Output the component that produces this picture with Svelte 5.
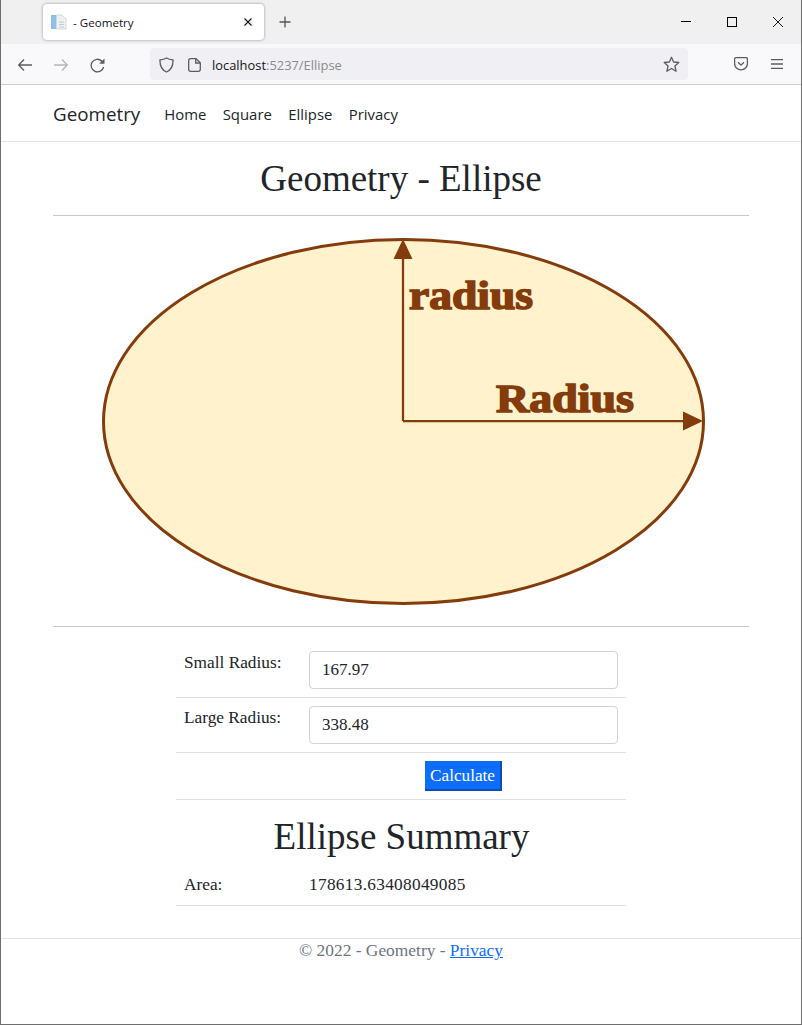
<script>
  const links = ['Home', 'Square', 'Ellipse', 'Privacy'];
  let small = $state('167.97');
  let large = $state('338.48');
</script>

<div class="window">
  <div class="tabstrip">
    <div class="tab">
      <svg class="favicon" width="16" height="16" viewBox="0 0 16 16">
        <rect x="0" y="1" width="5" height="14" fill="#8fc0e8"/>
        <path d="M5.500 1H11L15 5V15H5.500Z" fill="#eef1f4" stroke="#d3d8de" stroke-width="1"/>
        <path d="M8 8h5M8 10.500h5M8 13h5" stroke="#c0c8d0" stroke-width="1"/>
      </svg>
      <span class="tabtitle">- Geometry</span>
      <svg class="tabclose" width="10" height="10" viewBox="0 0 10 10"><path d="M1.500 1.500l7 7M8.500 1.500l-7 7" stroke="#15141a" stroke-width="1.100" fill="none"/></svg>
    </div>
    <svg class="newtab" width="12" height="12" viewBox="0 0 12 12"><path d="M6 0.500v11M0.500 6h11" stroke="#55545a" stroke-width="1.300" fill="none"/></svg>
    <div class="winctl">
      <span class="ctl"><svg width="10" height="10" viewBox="0 0 10 10"><path d="M0 4.500h10" stroke="#000" fill="none"/></svg></span>
      <span class="ctl"><svg width="10" height="10" viewBox="0 0 10 10"><rect x="0.500" y="0.500" width="9" height="9" stroke="#000" fill="none"/></svg></span>
      <span class="ctl"><svg width="10" height="10" viewBox="0 0 10 10"><path d="M0 0l10 10M10 0l-10 10" stroke="#000" stroke-width="0.900" fill="none"/></svg></span>
    </div>
  </div>

  <div class="toolbar">
    <svg class="back" width="14" height="12" viewBox="0 0 14 12"><path d="M14 6H1M6 0.500L0.700 6L6 11.500" stroke="#5b5b66" stroke-width="1.300" fill="none"/></svg>
    <svg class="fwd" width="14" height="12" viewBox="0 0 14 12"><path d="M0 6H13M8 0.500L13.300 6L8 11.500" stroke="#b4b4ba" stroke-width="1.300" fill="none"/></svg>
    <svg class="reload" width="15" height="15" viewBox="0 0 15 15"><path d="M13.600 9A6.300 6.300 0 1 1 11.800 3L13.500 4.800" stroke="#5b5b66" stroke-width="1.300" fill="none"/><path d="M14.500 0.500V5.800H9.200z" fill="#5b5b66"/></svg>
    <div class="urlbar">
      <svg class="shield" width="15" height="16" viewBox="0 0 15 16"><path d="M7.500 1C9.500 2.200 11.500 2.600 14 2.800C14.300 9 12 13 7.500 15C3 13 0.700 9 1 2.800C3.500 2.600 5.500 2.200 7.500 1Z" stroke="#5b5b66" stroke-width="1.300" fill="none"/></svg>
      <svg class="doc" width="13" height="14" viewBox="0 0 13 14"><path d="M2.500 0.700H8L12.300 4.800V11.500A1.800 1.800 0 0 1 10.500 13.300H2.500A1.800 1.800 0 0 1 0.700 11.500V2.500A1.800 1.800 0 0 1 2.500 0.700Z" stroke="#5b5b66" stroke-width="1.300" fill="none"/><path d="M7.700 1V5H12" stroke="#5b5b66" stroke-width="1.300" fill="none"/></svg>
      <span class="url">localhost<span class="dim">:5237/Ellipse</span></span>
      <svg class="star" width="17" height="17" viewBox="0 0 17 17"><path d="M8.500 1.300L10.600 6L15.800 6.500L11.900 10L13.100 15.200L8.500 12.500L3.900 15.200L5.100 10L1.200 6.500L6.400 6Z" stroke="#5b5b66" stroke-width="1.300" stroke-linejoin="round" fill="none"/></svg>
    </div>
    <svg class="pocket" width="14" height="14" viewBox="0 0 14 14"><path d="M1.800 0.700H12.200A1.200 1.200 0 0 1 13.400 1.900V6.500A6.400 6.400 0 0 1 0.600 6.500V1.900A1.200 1.200 0 0 1 1.800 0.700Z" stroke="#5b5b66" stroke-width="1.300" fill="none"/><path d="M4 5.200L7 8.200L10 5.200" stroke="#5b5b66" stroke-width="1.300" fill="none"/></svg>
    <svg class="menu" width="12" height="10" viewBox="0 0 12 10"><path d="M0 0.700h12M0 5h12M0 9.300h12" stroke="#5b5b66" stroke-width="1.300" fill="none"/></svg>
  </div>

  <nav class="navbar">
    <span class="brand">Geometry</span>
    <ul>
      {#each links as l}
        <li>{l}</li>
      {/each}
    </ul>
  </nav>

  <main class="container">
    <h1>Geometry - Ellipse</h1>
    <hr />
    <div class="figure">
      <svg width="696" height="392" viewBox="0 0 696 392">
        <ellipse cx="350.500" cy="205.500" rx="300" ry="182" fill="#fff2cc" stroke="#843c0c" stroke-width="3"/>
        <path d="M350 205V40M350 205H632" stroke="#843c0c" stroke-width="2.250" fill="none"/>
        <polygon points="350,23 340.500,43 359.500,43" fill="#843c0c"/>
        <polygon points="650,205 630,195.500 630,214.500" fill="#843c0c"/>
        <text class="lab" x="356" y="93" textLength="124" lengthAdjust="spacingAndGlyphs">radius</text>
        <text class="lab" x="443" y="196" textLength="138" lengthAdjust="spacingAndGlyphs">Radius</text>
      </svg>
    </div>
    <hr />
    <div class="tablewrap">
      <div class="row">
        <label class="name" for="small">Small Radius:</label>
        <input id="small" bind:value={small} />
      </div>
      <div class="row">
        <label class="name" for="large">Large Radius:</label>
        <input id="large" bind:value={large} />
      </div>
      <div class="row btnrow">
        <button>Calculate</button>
      </div>
      <h2>Ellipse Summary</h2>
      <div class="row result">
        <span class="name">Area:</span>
        <span class="val">178613.63408049085</span>
      </div>
    </div>
  </main>

  <footer>© 2022 - Geometry - <a href="#privacy">Privacy</a></footer>
</div>

<style>
  :global(body) {
    margin: 0;
    background: #fff;
  }
  .window {
    box-sizing: border-box;
    width: 802px;
    height: 1025px;
    border-left: 1px solid #6e6e6e;
    border-right: 1px solid #6e6e6e;
    border-bottom: 1px solid #6e6e6e;
    font-family: "Liberation Serif", serif;
    color: #212529;
    overflow: hidden;
  }
  .tabstrip {
    height: 44px;
    background: #f0f0f0;
    display: flex;
    align-items: center;
    padding-left: 42px;
  }
  .tab {
    width: 221px;
    height: 36px;
    background: #fff;
    border-radius: 4px;
    box-shadow: 0 0 3px rgba(0, 0, 0, 0.4);
    display: flex;
    align-items: center;
    padding: 0 11px 0 8px;
    box-sizing: border-box;
  }
  .favicon { flex: none; }
  .tabtitle {
    font: 11.600px "Open Sans", sans-serif;
    color: #15141a;
    margin-left: 6px;
    flex: 1;
  }
  .newtab { margin-left: 15px; }
  .winctl {
    margin-left: auto;
    display: flex;
  }
  .ctl {
    width: 46px;
    height: 30px;
    display: flex;
    align-items: center;
    justify-content: center;
  }
  .toolbar {
    height: 40px;
    background: #f9f9fb;
    border-bottom: 1px solid #ccc;
    display: flex;
    align-items: center;
    padding-left: 17px;
  }
  .back, .fwd, .reload { margin-top: 2px; }
  .fwd { margin-left: 22px; }
  .reload { margin-left: 22px; }
  .urlbar {
    margin-left: 45px;
    width: 538px;
    height: 32px;
    background: #f0f0f4;
    border-radius: 4px;
    display: flex;
    align-items: center;
    padding: 0 8px 0 9px;
    box-sizing: border-box;
  }
  .shield, .doc, .url, .star { margin-top: 1px; }
  .doc { margin-left: 14px; }
  .url {
    font: 12.900px "Open Sans", sans-serif;
    color: #15141a;
    margin-left: 11px;
    flex: 1;
  }
  .dim { color: #8a8a90; }
  .pocket { margin-left: 46px; }
  .menu { margin-left: 23px; }
  .navbar {
    height: 54px;
    padding-top: 2px;
    border-bottom: 1px solid #e3e3e3;
    box-sizing: content-box;
    display: flex;
    align-items: center;
    padding-left: 52px;
    font-family: "Open Sans", sans-serif;
  }
  .brand {
    font-size: 18.800px;
    color: #212529;
    margin-right: 24px;
  }
  ul {
    display: flex;
    gap: 16.400px;
    list-style: none;
    margin: 0;
    padding: 0;
    font-size: 14.900px;
    color: #212529;
  }
  .container {
    margin: 0 52px;
    width: 696px;
  }
  h1 {
    font-weight: 400;
    font-size: 37px;
    line-height: 44px;
    text-align: center;
    margin: 15px 0 14px;
  }
  hr {
    border: 0;
    border-top: 1px solid #c8c8c8;
    margin: 0;
  }
  .figure {
    height: 410px;
    overflow: hidden;
  }
  .figure svg { display: block; }
  .lab {
    font-family: "Liberation Serif", serif;
    font-weight: 700;
    font-size: 39px;
    fill: #843c0c;
    stroke: #843c0c;
    stroke-width: 1.500px;
  }
  .tablewrap {
    width: 450px;
    margin: 16px 0 0 123px;
    font-size: 17.300px;
  }
  .row {
    display: flex;
    align-items: flex-start;
    border-bottom: 1px solid #dee2e6;
    padding: 8px;
    box-sizing: border-box;
    height: 55px;
  }
  .name {
    width: 125px;
    flex: none;
    padding-top: 2px;
    line-height: 20px;
  }
  input {
    width: 309px;
    height: 38px;
    box-sizing: border-box;
    border: 1px solid #ced4da;
    border-radius: 4px;
    padding: 6px 12px;
    font: 17px "Liberation Serif", serif;
    color: #212529;
    margin-top: 0;
  }
  .btnrow {
    justify-content: center;
    height: 47px;
    padding-left: 133px;
  }
  button {
    width: 77px;
    height: 30px;
    padding: 1px 0 0;
    font: 17.200px "Liberation Serif", serif;
    color: #fff;
    background: #0d6efd;
    border: 0;
    border-right: 2px solid #0a4db5;
    border-bottom: 2px solid #0a4db5;
    border-radius: 0;
  }
  h2 {
    font-weight: 400;
    font-size: 37px;
    line-height: 44px;
    text-align: center;
    margin: 15px 0 7px 1px;
  }
  .result {
    height: 40px;
    padding-top: 9px;
  }
  .result .name { padding-top: 0; }
  .val {
    line-height: 20px;
    letter-spacing: 0.300px;
  }
  footer {
    margin-top: 32px;
    border-top: 1px solid #dee2e6;
    text-align: center;
    font-size: 17.400px;
    color: #6c757d;
    line-height: 23px;
  }
  a { color: #0d6efd; }
</style>
